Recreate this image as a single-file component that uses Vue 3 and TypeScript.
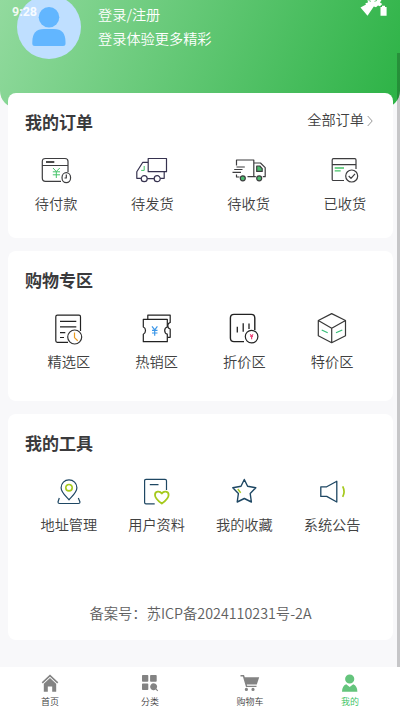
<script setup lang="ts">
interface Shape {
  d: string
  stroke?: string
  fill?: string
  width?: number
}
interface Entry {
  label: string
  shapes: Shape[]
}

const ink = '#3d3d3f'
const navy = '#1e4763'
const violet = '#36324f'
const green = '#45c468'
const lime = '#a5c91c'

const orders: Entry[] = [
  {
    label: '待付款',
    shapes: [
      { d: 'M21 27.3H5.5Q2.3 27.3 2.3 24V7.5Q2.3 4.5 5.5 4.5H25Q28 4.5 28 7.5V18M2.3 11.5H28' },
      { d: 'M6 8H14.3', stroke: '#111', width: 1.5 },
      { d: 'M13 14L16.3 17.5L19.8 14M16.3 17.5V24M12.8 17.8H20M12.8 20.8H20', stroke: green, width: 1 },
      { d: 'M22 23.7a4.3 5 0 1 0 8.6 0a4.3 5 0 1 0 -8.6 0ZM26.3 20.5V24H24.5', fill: '#fff' },
    ],
  },
  {
    label: '待发货',
    shapes: [
      { d: 'M12.2 4.5H30.5V17.7H12.2ZM12.2 8.3H6.8L0.8 17.7V24.3H5.2M11.2 24.7H18.2M24.2 24.3H28.2V17.7', stroke: violet },
      { d: 'M5.2 24.7a3 3 0 1 0 6 0a3 3 0 1 0 -6 0M18.2 24.7a3 3 0 1 0 6 0a3 3 0 1 0 -6 0', stroke: violet },
      { d: 'M8.2 12V16.4H5.2', stroke: green, width: 1 },
    ],
  },
  {
    label: '待收货',
    shapes: [
      { d: 'M3.5 11.5V6H20.8V22.7H14.5M20.8 9H27.5L32.2 13.7V22.7H29.8M3.5 20.5V23H6.5M20.8 22.7H22.8' },
      { d: 'M3.5 13H11.8M1.2 15.5H9.5M-0.5 18.3H8' },
      { d: 'M23.7 12H26.8L29.2 14.6V17.4H23.7Z', fill: '#4dbd70' },
      { d: 'M7.3 24.3a2.5 2.5 0 1 0 5 0a2.5 2.5 0 1 0 -5 0M23.7 24.3a2.5 2.5 0 1 0 5 0a2.5 2.5 0 1 0 -5 0', fill: '#4dbd70' },
    ],
  },
  {
    label: '已收货',
    shapes: [
      { d: 'M15 26.5H4.3Q3.2 26.5 3.2 25.4V6Q3.2 4.7 4.5 4.7H25.8Q27 4.7 27 6V15M3.2 10.6H27' },
      { d: 'M5.7 14H15M5.7 16.8H11.7', stroke: green, width: 1.3 },
      { d: 'M16.7 22a6 6 0 1 0 12 0a6 6 0 1 0 -12 0M19.7 22L22 24.3L26 19.8' },
    ],
  },
]

const zones: Entry[] = [
  {
    label: '精选区',
    shapes: [
      { d: 'M15 29.3H4.3Q2.8 29.3 2.8 27.8V3.8Q2.8 2.2 4.4 2.2H26Q27.5 2.2 27.5 3.8V18M7 8.3H23.3M7 13.9H23.3M7 19.7H12.3M7 24.5H11', stroke: '#222' },
      { d: 'M14.7 24a7 7 0 1 0 14 0a7 7 0 1 0 -14 0', stroke: '#333', fill: '#fff' },
      { d: 'M21.5 19.5V24.6L24.7 27.7', stroke: '#eb9a1d' },
    ],
  },
  {
    label: '热销区',
    shapes: [
      { d: 'M6.8 6V2.2H29.2V9.5Q26.8 10 26.8 12.8Q26.8 15.5 29.2 16V24.3H26.5', stroke: '#222' },
      { d: 'M2.3 6.3H26.3V14Q23.7 14.6 23.7 17.6Q23.7 20.6 26.3 21.2V28.7H2.3V21.2Q4.5 20.4 4.5 17.6Q4.5 14.8 2.3 14Z', stroke: '#222', fill: '#fff' },
      { d: 'M11 13.3L13.7 16.8L16.4 13.3M13.7 16.8V22.8M11 17.4H16.5M11 20H16.5', stroke: '#3c97e8' },
    ],
  },
  {
    label: '折价区',
    shapes: [
      { d: 'M16 28.6H6Q2.4 28.6 2.4 25V5Q2.4 1.4 6 1.4H23.3Q26.8 1.4 26.8 5V17', stroke: '#222', width: 1.4 },
      { d: 'M9.3 13.7V19.5M15.2 10.3V18.7M21 10.5V16', stroke: '#222', width: 1.3 },
      { d: 'M17.3 23.6a6.3 6.3 0 1 0 12.6 0a6.3 6.3 0 1 0 -12.6 0', stroke: '#222', fill: '#fff' },
      { d: 'M22.2 21.3L23.6 23.5L25 21.3M22.2 23.5H25M23.6 23V26.2', stroke: '#ed4579' },
    ],
  },
  {
    label: '特价区',
    shapes: [
      { d: 'M15.7 0.6L29.5 7.5V22.7L15.7 29.7L2.3 22.7V7.5ZM2.3 7.5L15.7 15.2L29.5 7.5M15.7 15.2V29.7', stroke: '#383838' },
      { d: 'M5.7 17L11.7 19.8M20 19.8L26.3 17', stroke: '#35bd77' },
    ],
  },
]

const tools: Entry[] = [
  {
    label: '地址管理',
    shapes: [
      { d: 'M16 23.8C13.6 20.9 8.1 16.5 8.1 11.7A7.9 7.9 0 0 1 23.9 11.7C23.9 16.5 18.4 20.9 16 23.8ZM6.3 22L5 26Q5 27.5 6.5 27.5H25.5Q27 27.5 27 26L25.3 22', stroke: navy },
      { d: 'M12.8 11.7a3.2 3.2 0 1 0 6.4 0a3.2 3.2 0 1 0 -6.4 0', stroke: lime, width: 1.6 },
    ],
  },
  {
    label: '用户资料',
    shapes: [
      { d: 'M13.7 27.8H5Q3.6 27.8 3.6 26.4V4.7Q3.6 3.4 5 3.4H24Q25.5 3.4 25.5 4.7V14M8.8 8.7H17.5', stroke: navy },
      { d: 'M20.8 27.5C17.8 25.3 14 22.1 14 18.9C14 15.4 18.7 14.4 20.8 17.6C22.9 14.4 27.6 15.4 27.6 18.9C27.6 22.1 23.8 25.3 20.8 27.5Z', stroke: lime, width: 1.8 },
    ],
  },
  {
    label: '我的收藏',
    shapes: [
      { d: 'M16.3 3.5L19.6 10.2L27.8 11.8L22.2 17.5L23.4 26L16.3 22.5L9.2 26L10.4 17.5L4.8 11.8L13 10.2Z', stroke: navy, width: 1.4 },
      { d: 'M9.8 13L12.7 16.7', stroke: lime, width: 1.4 },
    ],
  },
  {
    label: '系统公告',
    shapes: [
      { d: 'M4.8 10.8H10.7L20.8 5.2V26L10.7 20.4H4.8Z', stroke: navy, width: 1.3 },
      { d: 'M26.7 10.3Q29.4 15.5 26.7 20.8', stroke: lime, width: 1.7 },
    ],
  },
]

const tabs = [
  { label: '首页', active: false, d: 'M10 1.5L18.3 9.3L17.2 10.5L10 3.8L2.8 10.5L1.7 9.3ZM10 5L16.2 10.8V18.8H12.2V13.4H7.8V18.8H3.8V10.8Z' },
  { label: '分类', active: false, d: 'M2.8 2H7.5Q8.3 2 8.3 2.8V8Q8.3 8.8 7.5 8.8H2.8Q2 8.8 2 8V2.8Q2 2 2.8 2ZM10.9 2H15.9Q16.7 2 16.7 2.8V8Q16.7 8.8 15.9 8.8H10.9Q10.1 8.8 10.1 8V2.8Q10.1 2 10.9 2ZM2.8 10.5H7.5Q8.3 10.5 8.3 11.3V16.2Q8.3 17 7.5 17H2.8Q2 17 2 16.2V11.3Q2 10.5 2.8 10.5ZM13.6 10.2A3.5 3.5 0 0 1 16.5 15.7L18.2 17.4L17.4 18.2L15.6 16.6A3.5 3.5 0 1 1 13.6 10.2Z' },
  { label: '购物车', active: false, d: 'M0.5 2H4L4.8 4.2H19.2L16.8 11.5H6.8L7.2 12.8H16.5V14H6L2.9 3.5H0.5ZM6.4 14.8a1.6 1.6 0 1 1 0 3.2a1.6 1.6 0 1 1 0 -3.2ZM13 14.8a1.6 1.6 0 1 1 0 3.2a1.6 1.6 0 1 1 0 -3.2Z' },
  { label: '我的', active: true, d: 'M9.7 1.4A4.6 4.6 0 1 1 9.7 10.6A4.6 4.6 0 1 1 9.7 1.4ZM6.2 11.3L9.7 14L13.2 11.3Q17.3 12.8 17.4 18.8H2Q2.1 12.8 6.2 11.3Z' },
]

const sections = [
  { key: 'orders', title: '我的订单', entries: orders },
  { key: 'zones', title: '购物专区', entries: zones },
  { key: 'tools', title: '我的工具', entries: tools },
]
</script>

<template>
  <div class="screen">
    <header class="hero">
      <svg class="avatar" viewBox="0 0 64 64">
        <circle cx="32" cy="32" r="32" fill="#bfdfff" />
        <circle cx="32" cy="22.3" r="10.3" fill="#62b6ff" />
        <path d="M15.3 48.5V47Q15.3 34 27 34H37Q48.5 34 48.5 47V48.5Q48.5 51 46 51H17.8Q15.3 51 15.3 48.5Z" fill="#62b6ff" />
      </svg>
      <div class="greeting">
        <div>登录/注册</div>
        <div>登录体验更多精彩</div>
      </div>
      <span class="clock">9:28</span>
      <svg class="signals" viewBox="0 0 30 18">
        <path d="M0.5 7.5L6 4.6L5.3 3.3L8 2.5L7.5 0H21.5L20 2.6L22.3 4L20 6.2L18 5.5L16 7.2L13.8 6.5L7.5 15.7Z" fill="#fff" />
        <path d="M8.5 0.4L11 1.4M14.5 1.4L17 0.4" stroke="#4cbb61" stroke-width="0.8" />
        <path d="M20.5 7H22V5.8H25V7H26.6V15.8H20.5Z" fill="#fff" />
      </svg>
    </header>

    <main class="cards">
      <section v-for="section in sections" :key="section.key" class="card" :class="section.key">
        <div class="heading">
          <h2>{{ section.title }}</h2>
          <a v-if="section.key === 'orders'" class="more">
            全部订单
            <svg viewBox="0 0 6 12"><path d="M0.7 1L5.2 6L0.7 11" fill="none" stroke="#999" /></svg>
          </a>
        </div>
        <div class="grid">
          <div v-for="entry in section.entries" :key="entry.label" class="entry">
            <svg class="icon" viewBox="0 0 32 32">
              <path
                v-for="(shape, i) in entry.shapes"
                :key="i"
                :d="shape.d"
                :stroke="shape.stroke ?? ink"
                :fill="shape.fill ?? 'none'"
                :stroke-width="shape.width ?? 1.2"
                stroke-linejoin="round"
              />
            </svg>
            <span>{{ entry.label }}</span>
          </div>
        </div>
        <p v-if="section.key === 'tools'" class="record">备案号：苏ICP备2024110231号-2A</p>
      </section>
    </main>

    <nav class="tabbar">
      <div v-for="tab in tabs" :key="tab.label" class="tab" :class="{ active: tab.active }">
        <svg viewBox="0 0 20 20"><path :d="tab.d" /></svg>
        <span>{{ tab.label }}</span>
      </div>
    </nav>
    <div class="scrollbar"></div>
  </div>
</template>

<style>
body {
  overflow: hidden;
}
</style>

<style scoped>
.screen {
  position: relative;
  display: flex;
  flex-direction: column;
  height: 712px;
  overflow: hidden;
  background: #f8f8fa;
  color: #404040;
  font-family: "Noto Sans CJK SC", sans-serif;
  font-size: 14.2px;
  font-weight: 350;
}
.hero {
  position: relative;
  flex: none;
  display: flex;
  gap: 17px;
  box-sizing: border-box;
  height: 108px;
  padding-left: 17px;
  border-radius: 0 0 17px 17px;
  background: linear-gradient(113deg, #92da9e 0%, #2eb347 98%);
  color: #fff;
}
.avatar {
  width: 64px;
  height: 64px;
  margin-top: -5px;
}
.greeting {
  padding-top: 2px;
  line-height: 24px;
}
.clock {
  position: absolute;
  left: 12px;
  top: 4px;
  font: 700 12.5px/16px Roboto, sans-serif;
  color: rgba(255, 255, 255, 0.9);
}
.signals {
  position: absolute;
  left: 360px;
  top: 0;
  width: 30px;
  height: 18px;
}
.cards {
  position: relative;
  flex: 1;
  display: flex;
  flex-direction: column;
  gap: 13px;
  margin-top: -15px;
  padding: 0 7px 0 8px;
}
.card {
  box-sizing: border-box;
  border-radius: 8px;
  background: #fff;
}
.orders {
  height: 145px;
}
.zones {
  height: 150px;
}
.tools {
  height: 226px;
}
.heading {
  display: flex;
  justify-content: space-between;
  padding: 17px 20px 0 17px;
  line-height: 24px;
}
h2 {
  margin: 0;
  font-size: 17px;
  font-weight: 700;
  color: #3a3a3c;
}
.more {
  display: flex;
  align-items: center;
  gap: 3px;
  height: 20px;
  margin-top: -1px;
}
.more svg {
  width: 6px;
  height: 12px;
  margin-top: 3px;
}
.grid {
  display: grid;
  grid-template-columns: repeat(4, 1fr);
  padding: 20px 0 0;
}
.zones .grid,
.tools .grid {
  padding: 21px 17px 0;
}
.entry {
  display: flex;
  flex-direction: column;
  align-items: center;
  gap: 7px;
  line-height: 20px;
}
.zones .entry,
.tools .entry {
  gap: 6px;
}
.icon {
  width: 32px;
  height: 32px;
  overflow: visible;
}
.record {
  margin: 68px 0 0;
  text-align: center;
  font-size: 14.3px;
  line-height: 22px;
  color: #606060;
}
.tabbar {
  position: relative;
  display: grid;
  grid-template-columns: repeat(4, 1fr);
  flex: none;
  height: 45px;
  background: #fff;
}
.tab {
  display: flex;
  flex-direction: column;
  align-items: center;
  gap: 2px;
  padding-top: 6px;
  font-size: 9px;
  line-height: 13px;
  color: #404040;
}
.tab svg {
  width: 20px;
  height: 20px;
  fill: #838383;
}
.tab.active {
  color: #2fc05a;
}
.tab.active svg {
  fill: #64c47c;
}
.scrollbar {
  position: absolute;
  right: 0;
  top: 53px;
  width: 3px;
  height: 614px;
  background: rgba(0, 0, 0, 0.2);
}
</style>
